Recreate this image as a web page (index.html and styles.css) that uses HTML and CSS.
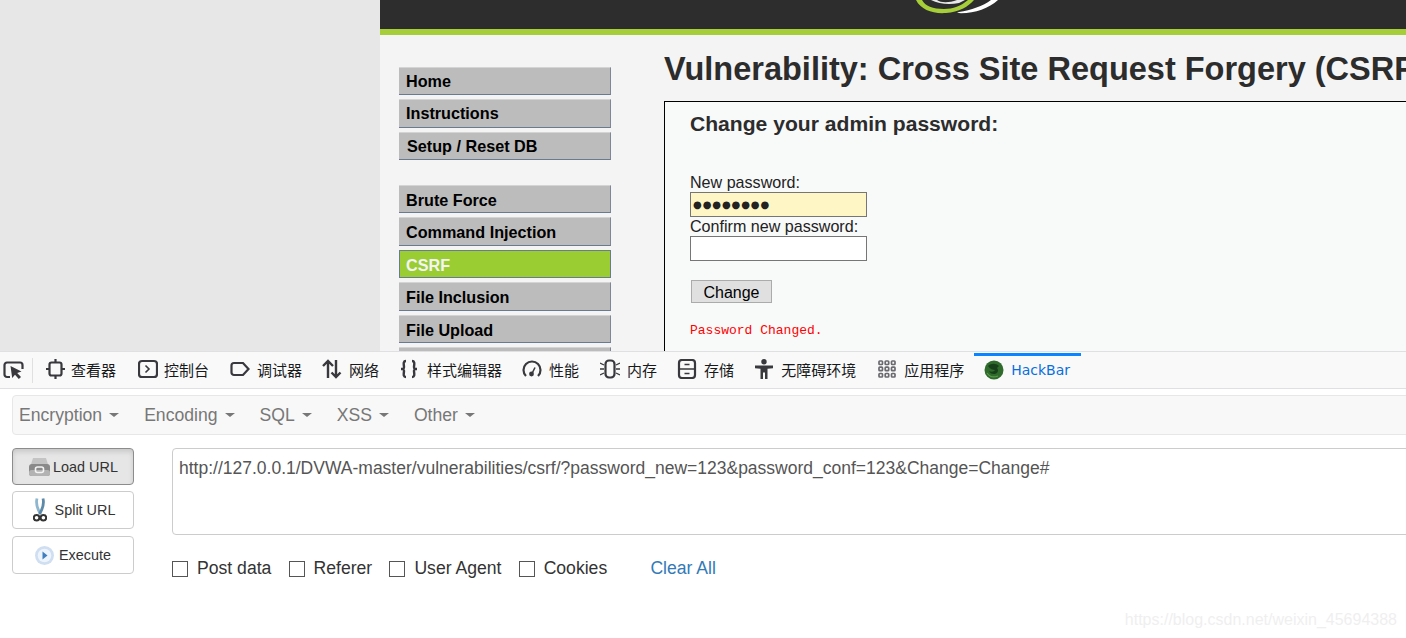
FILE: index.html
```html
<!DOCTYPE html>
<html lang="zh-CN">
<head>
    <meta charset="UTF-8">
    <meta name="viewport" content="width=device-width, initial-scale=1.0">
    <title>Vulnerability: Cross Site Request Forgery (CSRF)</title>
    <link rel="stylesheet" href="styles.css">
</head>
<body>
    <div class="viewport">
        <div class="blank"></div>
        <div class="dvwa">
            <div class="dvwa-header">
                <svg class="logo" width="90" height="14" viewBox="0 0 90 14">
                    <path d="M1 0C6 10 18 14 31 13C44 12 53 7 59 0L53 0C46 6 38 9 29 9C18 9 10 6 7 0Z" fill="#a6ce39"/>
                    <path d="M16 0C24 4 34 5 44 3L50 0L42 0C34 3 26 3 22 0Z" fill="#e8e8e8"/>
                    <path d="M42 13C58 14 73 9 83 0L76 0C68 6 56 10 44 12Z" fill="#ffffff"/>
                </svg>
            </div>
            <div class="dvwa-body">
                <div class="menu">
                    <ul class="menu-block">
                        <li>Home</li>
                        <li>Instructions</li>
                        <li class="shifted">Setup / Reset DB</li>
                    </ul>
                    <ul class="menu-block">
                        <li>Brute Force</li>
                        <li>Command Injection</li>
                        <li class="selected">CSRF</li>
                        <li>File Inclusion</li>
                        <li>File Upload</li>
                        <li></li>
                    </ul>
                </div>
                <div class="content">
                    <h1>Vulnerability: Cross Site Request Forgery (CSRF)</h1>
                    <div class="vulnerable-box">
                        <h3>Change your admin password:</h3>
                        <form class="pw-form">
                            <label>New password:</label>
                            <div class="pw-input filled">●●●●●●●●</div>
                            <label>Confirm new password:</label>
                            <div class="pw-input"></div>
                            <button type="button" class="change-btn">Change</button>
                        </form>
                        <pre class="changed">Password Changed.</pre>
                    </div>
                </div>
            </div>
        </div>
    </div>

    <div class="toolbar">
        <div class="picker">
            <svg width="21" height="18" viewBox="0 0 21 18" fill="none" stroke="#38383d" stroke-width="2.200">
                <path d="M7 16H4a2.500 2.500 0 0 1-2.500-2.500V4A2.500 2.500 0 0 1 4 1.500h13A2.500 2.500 0 0 1 19.500 4v4"/>
                <path d="M7.500 5l11 5.500-4.300 1.500 3.800 4-2.200 2-3.800-4.300-2.800 3.300z" fill="#38383d" stroke="none"/>
            </svg>
        </div>
        <div class="tool-sep"></div>
        <div class="tab inspector">
            <svg class="tab-icon" viewBox="0 0 20 20" fill="none" stroke="#38383d" stroke-width="2.200">
                <rect x="3.500" y="3.500" width="12" height="13" rx="2"/>
                <path d="M9.500 0v3.500M9.500 16.500V20M0 10h3.500M15.500 10H19"/>
            </svg>
            <span>查看器</span>
        </div>
        <div class="tab console">
            <svg class="tab-icon" viewBox="0 0 20 20" fill="none" stroke="#38383d" stroke-width="2.200">
                <rect x="1" y="2" width="18" height="16" rx="3"/>
                <path d="M7.500 6.500l3.500 3.500-3.500 3.500" stroke-width="1.600"/>
            </svg>
            <span>控制台</span>
        </div>
        <div class="tab">
            <svg class="tab-icon" viewBox="0 0 20 20" fill="none" stroke="#38383d" stroke-width="2.200">
                <path d="M4 4h9l5.500 6-5.500 6H4a2.500 2.500 0 0 1-2.500-2.500v-7A2.500 2.500 0 0 1 4 4z"/>
            </svg>
            <span>调试器</span>
        </div>
        <div class="tab">
            <svg class="tab-icon" viewBox="0 0 20 20" fill="none" stroke="#38383d" stroke-width="2.400">
                <path d="M6 19V2M1 7l5-5 5 5"/>
                <path d="M14 1v17M9.500 13.500l4.500 4.500 4.500-4.500"/>
            </svg>
            <span>网络</span>
        </div>
        <div class="tab style-tab">
            <svg class="tab-icon" viewBox="0 0 20 20" fill="none" stroke="#38383d" stroke-width="2.400">
                <path d="M7 2C3.500 2 5 6 5 8S4 10 2 10c2 0 3 0 3 2s-1.500 6 2 6"/>
                <path d="M13 2c3.500 0 2 4 2 6s1 2 3 2c-2 0-3 0-3 2s1.500 6-2 6"/>
            </svg>
            <span>样式编辑器</span>
        </div>
        <div class="tab">
            <svg class="tab-icon" viewBox="0 0 20 20" fill="none" stroke="#38383d" stroke-width="2.200">
                <path d="M4 17A8.500 8.500 0 1 1 16 17"/>
                <circle cx="9.500" cy="15" r="2.400" fill="#38383d" stroke="none"/>
                <path d="M10 14.500l3-6" stroke-width="1.600"/>
            </svg>
            <span>性能</span>
        </div>
        <div class="tab memory">
            <svg class="tab-icon" viewBox="0 0 20 20" fill="none" stroke="#38383d" stroke-width="2.200">
                <rect x="5.500" y="1.500" width="9" height="17" rx="3.500"/>
                <path d="M0 4l4 2M0 10h4M0 16l4-2M20 4l-4 2M20 10h-4M20 16l-4-2" stroke-width="1.300"/>
            </svg>
            <span>内存</span>
        </div>
        <div class="tab">
            <svg class="tab-icon" viewBox="0 0 20 20" fill="none" stroke="#38383d" stroke-width="2.200">
                <rect x="2" y="1" width="16" height="18" rx="3"/>
                <path d="M2 10h16M7.500 5.500h5M7.500 14.500h5" stroke-width="1.600"/>
            </svg>
            <span>存储</span>
        </div>
        <div class="tab spaced">
            <svg class="tab-icon" viewBox="0 0 20 20" fill="#38383d">
                <circle cx="10" cy="2.800" r="2.700"/>
                <path d="M1 6.500h18v2.800l-5.500.5v10.200h-2.500v-6.500h-2v6.500H6.500V9.800L1 9.300z"/>
            </svg>
            <span>无障碍环境</span>
        </div>
        <div class="tab">
            <svg class="tab-icon" viewBox="0 0 20 20" fill="none" stroke="#6a6a6f" stroke-width="1.700">
                <rect x="2" y="2" width="3.500" height="3.500" rx=".8"/><rect x="8.200" y="2" width="3.500" height="3.500" rx=".8"/><rect x="14.500" y="2" width="3.500" height="3.500" rx=".8"/>
                <rect x="2" y="8.200" width="3.500" height="3.500" rx=".8"/><rect x="8.200" y="8.200" width="3.500" height="3.500" rx=".8"/><rect x="14.500" y="8.200" width="3.500" height="3.500" rx=".8"/>
                <rect x="2" y="14.500" width="3.500" height="3.500" rx=".8"/><rect x="8.200" y="14.500" width="3.500" height="3.500" rx=".8"/><rect x="14.500" y="14.500" width="3.500" height="3.500" rx=".8"/>
            </svg>
            <span>应用程序</span>
        </div>
        <div class="tab active">
            <svg class="tab-icon" viewBox="0 0 20 20">
                <circle cx="10" cy="10" r="9.500" fill="#2f6b2a"/>
                <path d="M4 6c3-3 8-3 11 0l-2 2c2 2 1 5-2 6-3 .5-5-1-6-3 2 1 5 1 6-1-2 0-5-1-7-4z" fill="#17401a"/>
                <path d="M3 13c2 3 6 5 11 3" stroke="#5c9a4e" stroke-width="1.200" fill="none"/>
            </svg>
            <span>HackBar</span>
        </div>
    </div>

    <div class="hackbar">
        <nav class="hb-nav">
            <span class="hb-drop">Encryption</span>
            <span class="hb-drop">Encoding</span>
            <span class="hb-drop">SQL</span>
            <span class="hb-drop">XSS</span>
            <span class="hb-drop">Other</span>
        </nav>
        <div class="hb-main">
            <div class="hb-actions">
                <button type="button" class="hb-btn load">
                    <svg width="21" height="18" viewBox="0 0 21 18">
                        <path d="M4 0h13l2.500 8H1.500z" fill="#c4c4c4"/>
                        <rect x="0" y="6" width="21" height="12" rx="3" fill="#8a8a8a"/>
                        <rect x="0" y="12" width="21" height="6" rx="2.500" fill="#b3b3b3"/>
                        <rect x="6.500" y="9" width="8" height="5.500" rx="2" fill="none" stroke="#f4f4f4" stroke-width="1.600"/>
                    </svg>
                    Load URL
                </button>
                <button type="button" class="hb-btn split">
                    <svg width="14" height="24" viewBox="0 0 14 24" fill="none">
                        <path d="M4 0.500C2.500 6 4.500 11 7.500 16" stroke="#8fb6cf" stroke-width="2.800"/>
                        <path d="M10 0.500C11.500 6 9.500 11 6.500 16" stroke="#5d8aa8" stroke-width="2.800"/>
                        <circle cx="3.600" cy="19.800" r="2.800" stroke="#333" stroke-width="2"/>
                        <circle cx="10.400" cy="19.800" r="2.800" stroke="#333" stroke-width="2"/>
                    </svg>
                    Split URL
                </button>
                <button type="button" class="hb-btn exec">
                    <svg width="19" height="19" viewBox="0 0 19 19">
                        <circle cx="9.500" cy="9.500" r="9.500" fill="#cfdff1"/>
                        <circle cx="9.500" cy="9.500" r="6.800" fill="#eef4fb"/>
                        <path d="M7.500 5.500l5 4-5 4z" fill="#3f7fc1"/>
                    </svg>
                    Execute
                </button>
            </div>
            <div class="hb-form">
                <textarea class="hb-url" spellcheck="false">http://127.0.0.1/DVWA-master/vulnerabilities/csrf/?password_new=123&amp;password_conf=123&amp;Change=Change#</textarea>
                <div class="hb-options">
                    <label class="hb-check"><input type="checkbox">Post data</label>
                    <label class="hb-check"><input type="checkbox">Referer</label>
                    <label class="hb-check"><input type="checkbox">User Agent</label>
                    <label class="hb-check"><input type="checkbox">Cookies</label>
                    <a class="hb-clear">Clear All</a>
                </div>
            </div>
        </div>
    </div>

    <div class="watermark">https://blog.csdn.net/weixin_45694388</div>
</body>
</html>
```

FILE: styles.css
```css
*{
    margin: 0;
    padding: 0;
    box-sizing: border-box;
    list-style: none;
}

html, body{
    height: 100%;
    overflow: hidden;
}

body{
    position: relative;
    background-color: #fff;
    font-family: "Liberation Sans", Arial, sans-serif;
}

.viewport{
    height: 351px;
    display: flex;
    overflow: hidden;
}

.blank{
    width: 380px;
    background-color: #e7e7e7;
}

.dvwa{
    flex: 1;
    min-width: 0;
    background-color: #f4f4f4;
    overflow: hidden;
}

.dvwa-header{
    position: relative;
    height: 35px;
    background-color: #2d2d2d;
    border-bottom: 6px solid #a6ce39;
}

.logo{
    position: absolute;
    left: 535px;
    top: 0;
}

.dvwa-body{
    display: flex;
}

.menu{
    width: 284px;
    flex: none;
    padding: 31.9px 0 0 19px;
}

.menu-block{
    width: 212px;
    margin-bottom: 24.6px;
}

.menu-block li{
    height: 28.5px;
    margin-bottom: 4px;
    padding-left: 7px;
    font-size: 16.2px;
    font-weight: 700;
    line-height: 28px;
    color: #000;
    background-color: #bcbcbc;
    border-top: 1px solid #d4d4d4;
    border-bottom: 1px solid #6a7a90;
    border-right: 1px solid #7d8796;
}

.menu-block:first-child li{
    line-height: 26px;
}

.menu-block li.shifted{
    padding-left: 8px;
}

.menu-block li.selected{
    color: #f4f4f4;
    background-color: #9acd32;
    border: 1px solid #6a7a90;
    padding-left: 6px;
}

.content{
    flex: 1;
    min-width: 0;
    margin-right: -400px;
}

.content h1{
    height: 66px;
    padding-top: 15px;
    font-size: 32.5px;
    line-height: 38px;
    font-weight: 700;
    color: #2c2c2c;
    white-space: nowrap;
}

.vulnerable-box{
    height: 300px;
    padding: 10px 0 0 25px;
    border: 1px solid #000;
    background-color: #f8f9f9;
}

.vulnerable-box h3{
    font-size: 21.1px;
    line-height: 24px;
    font-weight: 700;
    color: #2c2c2c;
}

.pw-form{
    display: flex;
    flex-direction: column;
    align-items: flex-start;
    margin-top: 38px;
    font-size: 16.1px;
    color: #222;
}

.pw-form label{
    height: 19px;
    line-height: 19px;
}

.pw-form label:first-child{
    height: 18px;
    line-height: 17px;
}

.pw-input{
    width: 177px;
    height: 25px;
    border: 1px solid #767676;
    background-color: #fff;
}

.pw-input.filled{
    background-color: #fff6c6;
    padding-left: 2px;
    font-family: "DejaVu Sans", sans-serif;
    font-size: 10px;
    line-height: 23px;
    letter-spacing: 0.9px;
    color: #222;
}

.change-btn{
    width: 81px;
    height: 23px;
    margin: 19px 0 0 1px;
    padding-top: 2px;
    font-family: inherit;
    font-size: 16px;
    color: #000;
    background-color: #e0e0e0;
    border: 1px solid #ababab;
}

.changed{
    margin-top: 20px;
    font-family: "Liberation Mono", monospace;
    font-size: 13px;
    line-height: 16px;
    color: #f00;
}

.toolbar{
    height: 38px;
    display: flex;
    align-items: stretch;
    background-color: #f9f9fa;
    border-top: 1px solid #e0e0e2;
    border-bottom: 1px solid #e0e0e2;
    font-family: "Noto Sans CJK SC", "Liberation Sans", sans-serif;
    font-size: 15px;
    color: #18191a;
}

.picker{
    width: 32px;
    flex: none;
    display: flex;
    align-items: center;
    padding-left: 3px;
}

.tool-sep{
    width: 1px;
    height: 25px;
    align-self: center;
    margin-right: 3px;
    background-color: #e0e0e2;
}

.tab{
    display: flex;
    align-items: center;
    gap: 7px;
    padding: 0 10px 2px;
    white-space: nowrap;
}

.tab-icon{
    width: 20px;
    height: 20px;
    flex: none;
}

.tab.inspector{
    gap: 5px;
    padding-right: 12px;
}

.tab.console{
    gap: 6px;
    padding-right: 11px;
}

.tab.memory{
    margin-left: 1px;
}

.tab.spaced{
    margin-right: 1px;
}

.tab.style-tab{
    gap: 8px;
}

.tab.active{
    position: relative;
    padding: 0 11px 1px 10px;
    color: #0a6fdc;
    font-family: "DejaVu Sans", "Noto Sans", sans-serif;
    font-size: 14px;
}

.tab.active::before{
    content: "";
    position: absolute;
    top: 1px;
    left: 0;
    right: 0;
    height: 3px;
    background-color: #0a84ff;
}

.hackbar{
    padding: 6px 0 0 12px;
    overflow: hidden;
}

.hb-nav{
    width: 1420px;
    height: 40px;
    display: flex;
    align-items: center;
    gap: 25px;
    padding-left: 6px;
    background-color: #f8f8f8;
    border: 1px solid #e7e7e7;
    border-radius: 4px;
    font-size: 17.6px;
    color: #777;
}

.hb-drop{
    display: flex;
    align-items: center;
    gap: 7px;
}

.hb-drop::after{
    content: "";
    border-top: 4px solid #777;
    border-left: 5px solid transparent;
    border-right: 5px solid transparent;
}

.hb-main{
    display: flex;
    gap: 38px;
    margin-top: 13px;
}

.hb-actions{
    width: 122px;
    flex: none;
    display: flex;
    flex-direction: column;
    gap: 6px;
}

.hb-btn{
    display: flex;
    align-items: center;
    justify-content: center;
    gap: 3px;
    height: 38px;
    font-family: inherit;
    font-size: 14.4px;
    color: #333;
    background-color: #fff;
    border: 1px solid #ccc;
    border-radius: 4px;
}

.hb-btn.load{
    height: 37px;
    padding-left: 1px;
    background-color: #e6e6e6;
    border-color: #8c8c8c;
    box-shadow: inset 0 3px 5px rgba(0, 0, 0, .125);
}

.hb-btn.split{
    gap: 8px;
    padding-left: 2px;
}

.hb-btn.exec{
    gap: 5px;
    margin-top: 1px;
}

.hb-form{
    flex: none;
    width: 1260px;
}

.hb-url{
    display: block;
    width: 100%;
    height: 87px;
    padding: 9px 6px;
    font-family: inherit;
    font-size: 17.5px;
    line-height: 21px;
    color: #555;
    border: 1px solid #ccc;
    border-radius: 4px;
    resize: none;
    outline: none;
}

.hb-options{
    display: flex;
    align-items: center;
    gap: 17.2px;
    margin-top: 23px;
    font-size: 17.6px;
    color: #333;
}

.hb-check{
    display: flex;
    align-items: center;
    gap: 9px;
}

.hb-check input{
    appearance: none;
    width: 16px;
    height: 16px;
    background-color: #fff;
    border: 1px solid #555;
}

.hb-clear{
    margin-left: 26px;
    color: #337ab7;
}

.watermark{
    position: absolute;
    right: 9px;
    top: 611px;
    font-size: 16px;
    line-height: 18px;
    color: #efefef;
}
```
